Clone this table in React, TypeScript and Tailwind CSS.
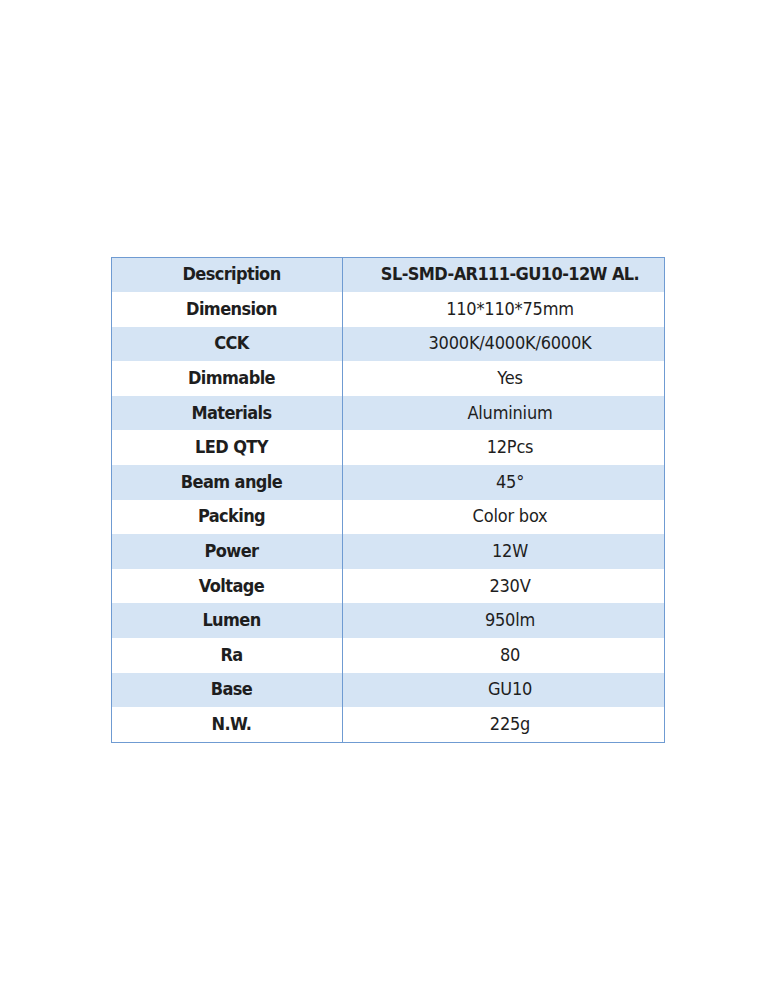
const rows: [string, string][] = [
  ['Dimension', '110*110*75mm'],
  ['CCK', '3000K/4000K/6000K'],
  ['Dimmable', 'Yes'],
  ['Materials', 'Aluminium'],
  ['LED QTY', '12Pcs'],
  ['Beam angle', '45°'],
  ['Packing', 'Color box'],
  ['Power', '12W'],
  ['Voltage', '230V'],
  ['Lumen', '950lm'],
  ['Ra', '80'],
  ['Base', 'GU10'],
  ['N.W.', '225g'],
]

const font = { fontFamily: '"DejaVu Sans Condensed", "Liberation Sans", sans-serif' }

export default function App() {
  return (
    <div className="min-h-[1000px] w-[778px] bg-white pt-[257px] pl-[111px]" style={font}>
      <div className="w-[554px] border border-[#6f9bd2] text-[#1e1e1e]">
        <div className="grid h-[34px] grid-cols-[231px_1fr] bg-[#d5e4f4]">
          <div className="flex items-center justify-center border-r border-[#6f9bd2] pb-[3px] pl-[9px] text-[18px] font-bold tracking-[-0.6px]">Description</div>
          <div className="flex items-center justify-center pb-[3px] pl-[13px] text-[18px] font-bold tracking-[-0.6px]">SL-SMD-AR111-GU10-12W AL.</div>
        </div>
        {rows.map(([label, value], i) => (
          <div
            key={label}
            className={`grid h-[34.6px] grid-cols-[231px_1fr] ${i % 2 === 1 ? 'bg-[#d5e4f4]' : 'bg-white'}`}
          >
            <div className="flex items-center justify-center border-r border-[#6f9bd2] pb-[2px] pl-[9px] text-[18px] font-bold tracking-[-0.6px]">{label}</div>
            <div className="flex items-center justify-center pb-[2px] pl-[13px] text-[18px] tracking-[-0.2px]">{value}</div>
          </div>
        ))}
      </div>
    </div>
  )
}
